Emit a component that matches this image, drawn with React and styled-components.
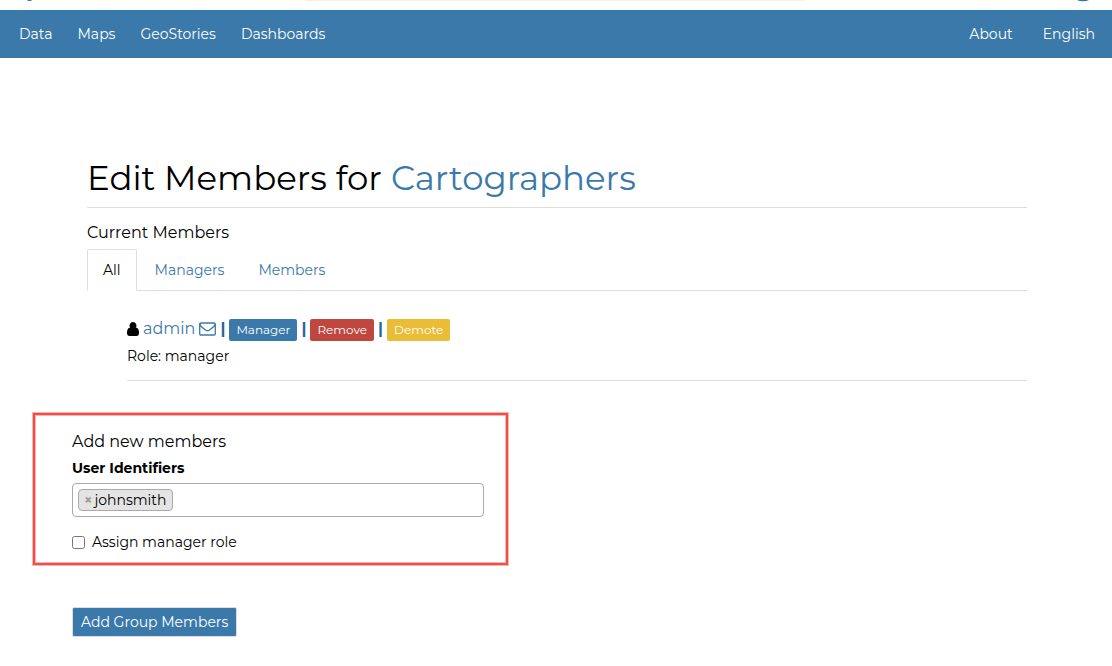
import styled, { createGlobalStyle } from "styled-components";
import { useState } from "react";

const tabs = ["All", "Managers", "Members"];

export default function App () {

    const [tab, setTab] = useState("All");
    const [users, setUsers] = useState(["johnsmith"]);
    const [manager, setManager] = useState(false);

    function removeUser (name) {
        setUsers(users.filter(user => user !== name));
    }

    return (
        <>
            <GlobalStyle />
            <TopStrip>
                <LogoTip viewBox="0 0 10 2"><path d="M3 0h5l-1 1H4z" /></LogoTip>
                <SearchShadow />
                <AvatarTip viewBox="0 0 16 2"><path d="M2 0h12q-2.500 1.300-6 1.300T2 0z" /></AvatarTip>
            </TopStrip>
            <Navbar>
                <NavGroup $gap={25}>
                    <NavLink href="#data">Data</NavLink>
                    <NavLink href="#maps">Maps</NavLink>
                    <NavLink href="#geostories">GeoStories</NavLink>
                    <NavLink href="#dashboards">Dashboards</NavLink>
                </NavGroup>
                <NavGroup $gap={30}>
                    <NavLink href="#about">About</NavLink>
                    <NavLink href="#language">English</NavLink>
                </NavGroup>
            </Navbar>
            <Page>
                <Container>
                    <MembersSection>
                        <Title>Edit Members for <a href="#group">Cartographers</a></Title>
                        <Subtitle>Current Members</Subtitle>
                        <Tabs>
                            {tabs.map(name => (
                                <Tab key={name} type="button" $active={tab === name} onClick={() => setTab(name)}>{name}</Tab>
                            ))}
                        </Tabs>
                        <Member>
                            <MemberLine>
                                <UserIcon viewBox="0 0 12 14"><path d="M6 0a3.500 3.500 0 0 1 2.800 5.600C11.200 6 12 8.200 12 10.700 12 12.900 11 14 9.500 14h-7C1 14 0 12.900 0 10.700 0 8.200.8 6 3.200 5.600A3.500 3.500 0 0 1 6 0z" /></UserIcon>
                                <a href="#admin">admin</a>
                                <MailIcon viewBox="0 0 17 14"><path d="M2 1h13q1.300 0 1.300 1.300v9.400Q16.300 13 15 13H2Q.7 13 .7 11.700V2.300Q.7 1 2 1zM.9 2.200q.3 1.500 1.800 2.700l3.800 3q2 1.500 4 0l3.800-3q1.500-1.200 1.800-2.700" /></MailIcon>
                                <Divider>|</Divider>
                                <SmallButton type="button" $color="#3a79a9">Manager</SmallButton>
                                <Divider>|</Divider>
                                <SmallButton type="button" $color="#c0473f">Remove</SmallButton>
                                <Divider>|</Divider>
                                <SmallButton type="button" $color="#ebbc35">Demote</SmallButton>
                            </MemberLine>
                            <Role>Role: manager</Role>
                        </Member>
                    </MembersSection>
                    <form onSubmit={e => e.preventDefault()}>
                        <Highlight>
                            <Subtitle>Add new members</Subtitle>
                            <FieldLabel htmlFor="users">User Identifiers</FieldLabel>
                            <TagBox>
                                {users.map(user => (
                                    <Tag key={user}>
                                        <RemoveTag type="button" aria-label={`Remove ${user}`} onClick={() => removeUser(user)}>×</RemoveTag>
                                        {user}
                                    </Tag>
                                ))}
                                <TagInput id="users" type="text" />
                            </TagBox>
                            <CheckLabel>
                                <input type="checkbox" checked={manager} onChange={() => setManager(!manager)} />
                                Assign manager role
                            </CheckLabel>
                        </Highlight>
                        <SubmitButton type="submit">Add Group Members</SubmitButton>
                    </form>
                </Container>
            </Page>
        </>
    );
}

const GlobalStyle = createGlobalStyle`

    * {
        box-sizing: border-box;
    }

    body {
        margin: 0;
        background: #ffffff;
        color: #000000;
        font-family: Montserrat, Inter, sans-serif;
        font-size: 14px;
        line-height: 20px;
    }

    button, input {
        font-family: inherit;
        font-size: 14px;
    }

    a {
        color: #3a79a9;
        text-decoration: none;
    }

`;

const TopStrip = styled.div`

    display: flex;
    justify-content: space-between;
    height: 10px;
    padding: 0 21px 0 24px;
    overflow: hidden;

`;

const LogoTip = styled.svg`

    width: 10px;
    height: 2px;
    fill: #3a79a9;

`;

const SearchShadow = styled.div`

    width: 500px;
    height: 1px;
    background: #f2f2f2;
    box-shadow: 0 0 2px #eeeeee;

`;

const AvatarTip = styled.svg`

    width: 16px;
    height: 2px;
    fill: #1f78b4;

`;

const Navbar = styled.nav`

    display: flex;
    align-items: center;
    justify-content: space-between;
    height: 48px;
    padding: 0 17px 0 19px;
    background: #3a79a9;

`;

const NavGroup = styled.div`

    display: flex;
    gap: ${props => props.$gap}px;

`;

const NavLink = styled.a`

    color: #ffffff;

`;

const Page = styled.main`

    padding: 97px 0 30px 2px;

`;

const Container = styled.div`

    max-width: 970px;
    margin: 0 auto;

`;

const MembersSection = styled.section`

    padding: 0 15px;

`;

const Title = styled.h1`

    margin: 0 0 15px;
    padding-bottom: 6px;
    border-bottom: 1px solid #dddddd;
    font-size: 34px;
    font-weight: 400;
    line-height: 46px;

`;

const Subtitle = styled.h2`

    margin: 0;
    font-size: 16px;
    font-weight: 400;
    line-height: 20px;

`;

const Tabs = styled.div`

    display: flex;
    gap: 2px;
    margin-top: 6px;
    border-bottom: 1px solid #dddddd;

`;

const Tab = styled.button`

    height: 42px;
    margin-bottom: -1px;
    padding: 0 15px;
    border: 1px solid ${props => props.$active ? "#dddddd" : "transparent"};
    border-bottom-color: ${props => props.$active ? "#ffffff" : "#dddddd"};
    border-radius: 2px 2px 0 0;
    background: ${props => props.$active ? "#ffffff" : "none"};
    color: ${props => props.$active ? "#000000" : "#3a79a9"};

`;

const Member = styled.div`

    margin: 28px 0 0 40px;
    padding-bottom: 14px;
    border-bottom: 1px solid #dddddd;

`;

const MemberLine = styled.div`

    display: flex;
    align-items: center;
    gap: 4px;
    height: 22px;
    font-size: 16px;
    line-height: 18px;

    > a {
        padding-bottom: 2px;
    }

`;

const UserIcon = styled.svg`

    width: 12px;
    height: 14px;
    margin-bottom: 2px;

`;

const MailIcon = styled.svg`

    width: 17px;
    height: 14px;
    margin-bottom: 2px;
    fill: none;
    stroke: #3a79a9;
    stroke-width: 1.3;

`;

const Divider = styled.span`

    width: 5px;
    padding-bottom: 2px;
    color: #1f669c;
    font-weight: 700;
    text-align: center;

`;

const SmallButton = styled.button`

    height: 22px;
    padding: 0 7px 1px;
    border: 0;
    border-radius: 2px;
    background: ${props => props.$color};
    color: #ffffff;
    font-size: 12px;

`;

const Role = styled.div`

    margin-top: 5px;

`;

const Highlight = styled.div`

    max-width: 475px;
    margin: 32px 0 42px -39px;
    padding: 17px 22px 11px 37px;
    border: 2px solid #ef4f49;
    box-shadow: 0 0 0 1px #f9b5b2, inset 0 0 0 1px #f9b5b2;

`;

const FieldLabel = styled.label`

    display: block;
    margin: 6px 0 5px;
    font-weight: 700;

`;

const TagBox = styled.div`

    display: flex;
    align-items: center;
    height: 34px;
    padding: 0 5px;
    border: 1px solid #aaaaaa;
    border-radius: 4px;

`;

const Tag = styled.span`

    display: flex;
    align-items: center;
    gap: 2px;
    height: 22px;
    padding: 0 6px 0 5px;
    border: 1px solid #aaaaaa;
    border-radius: 4px;
    background: #e4e4e4;

`;

const RemoveTag = styled.button`

    padding: 0;
    border: 0;
    background: none;
    color: #999999;
    font-weight: 700;

`;

const TagInput = styled.input`

    flex: 1;
    min-width: 0;
    border: 0;
    outline: none;
    background: none;

`;

const CheckLabel = styled.label`

    display: flex;
    align-items: center;
    gap: 7px;
    margin-top: 15px;

    input {
        width: 13px;
        height: 13px;
        margin: 0;
    }

`;

const SubmitButton = styled.button`

    height: 30px;
    padding: 0 8px;
    border: 1px solid #dddddd;
    border-radius: 2px;
    background: #3a79a9;
    color: #ffffff;

`;
